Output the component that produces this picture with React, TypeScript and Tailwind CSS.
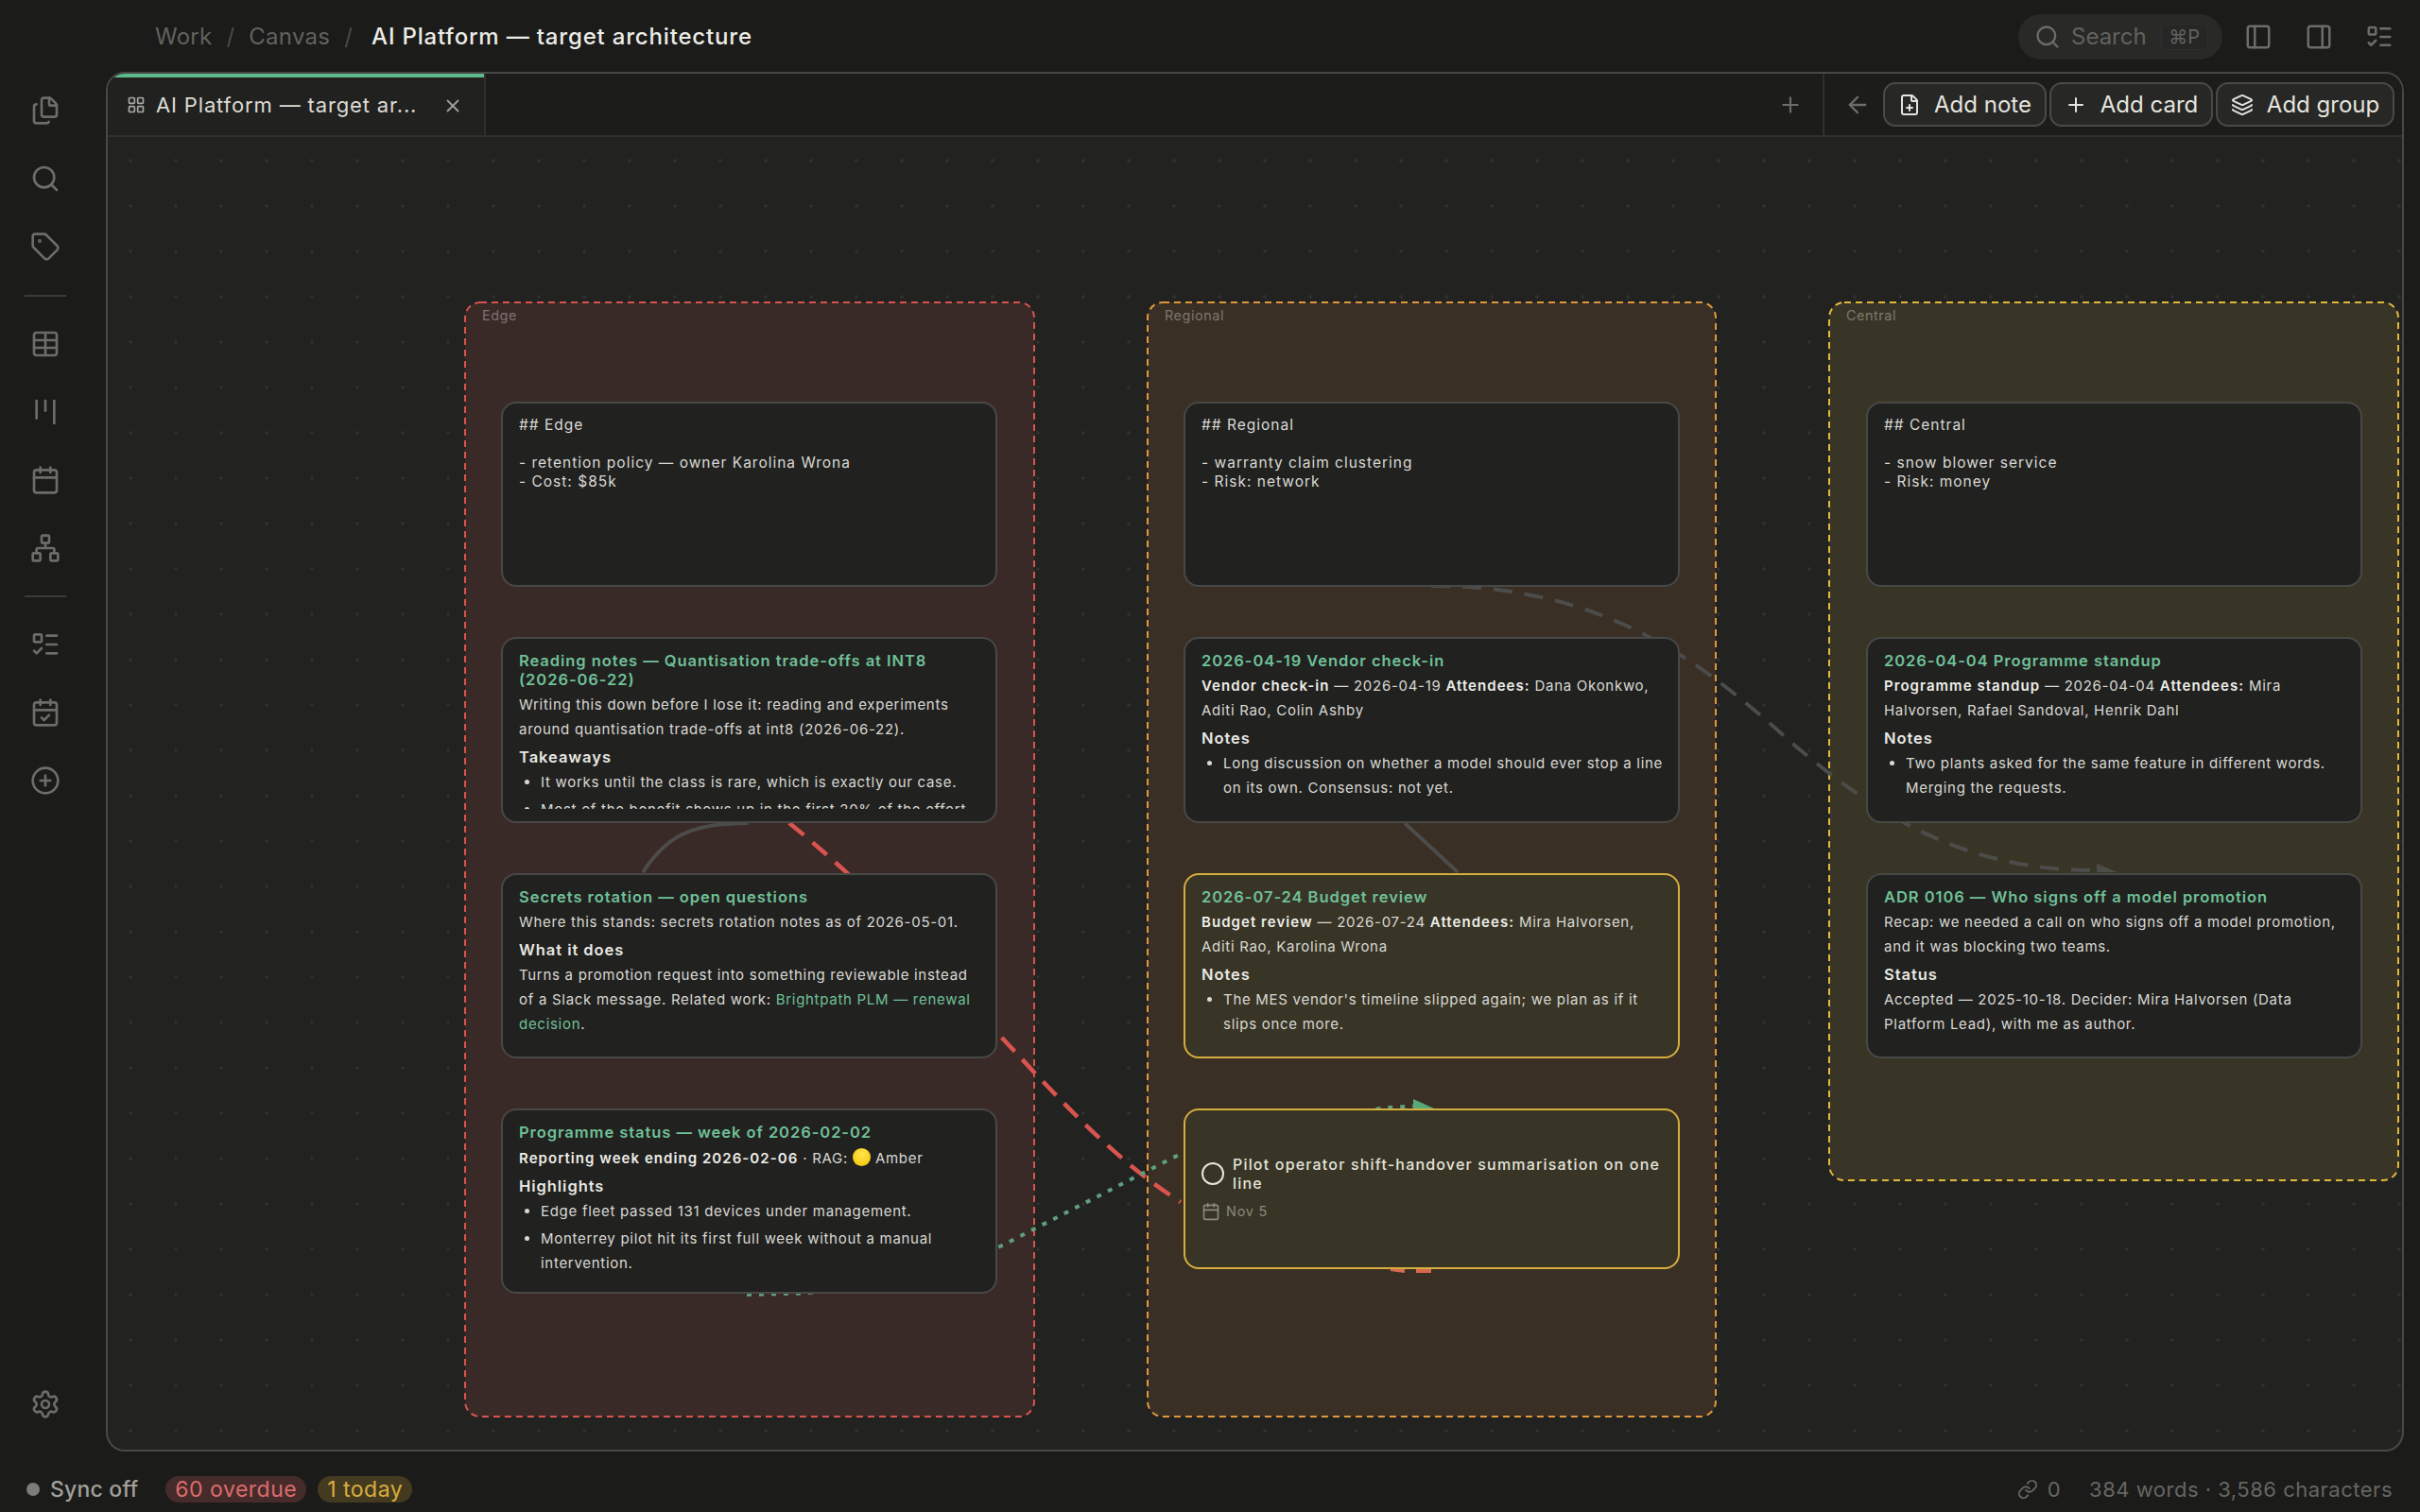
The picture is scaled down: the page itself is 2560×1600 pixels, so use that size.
import React from "react";
import {
  Files, Search, Tag, Table, Kanban, Calendar, Network, ListTodo, CalendarCheck, CirclePlus, Settings,
  PanelLeft, PanelRight, LayoutGrid, X, Plus, ArrowLeft, FilePlus, Layers, Link,
} from "lucide-react";

function Rail({ icon: Icon, cls = "" }: { icon: any; cls?: string }) {
  return (
    <div className={"flex h-[72px] w-full items-center justify-center text-[#6c6c68] " + cls}>
      <Icon size={32} />
    </div>
  );
}

function Sep() {
  return <div className="my-[-1px] h-[2px] w-[44px] bg-[#3a3a38]" />;
}

function ActionBtn({ icon: Icon, label, cls }: { icon: any; label: string; cls: string }) {
  return (
    <button className={"flex h-[47px] items-center justify-center gap-[14px] rounded-[13px] border-2 border-[#4a4a48] bg-[#272726] text-[24px] text-[#e4e4de] " + cls}>
      <Icon size={24} />
      <span>{label}</span>
    </button>
  );
}

function Group({ cls, fill, stroke, w, h, label }: { cls: string; fill: string; stroke: string; w: number; h: number; label: string }) {
  return (
    <div className={"absolute z-0 " + cls}>
      <svg width={w} height={h} className="absolute left-0 top-0">
        <rect x={1} y={1} width={w - 2} height={h - 2} rx={16} fill={fill} stroke={stroke} strokeWidth={2} strokeDasharray="7 5" />
      </svg>
      <div className="absolute left-[19px] top-[5px] text-[14.5px] leading-5 tracking-[0.5px] text-[#ffffff]/35">{label}</div>
    </div>
  );
}

function Card({ cls, sel, children }: { cls: string; sel?: boolean; children: React.ReactNode }) {
  return (
    <div className={"absolute z-20 box-border rounded-[16px] border-2 py-[13px] pl-[17px] pr-[12px] " + (sel ? "border-[#d6ae3e] bg-[#383426] " : "border-[#484846] bg-[#212120] ") + cls}>
      <div className="h-full overflow-hidden text-[15px] leading-[26px] tracking-[0.71px] text-[#d9d9d3]">{children}</div>
    </div>
  );
}

const T = ({ children }: { children: React.ReactNode }) => (
  <div className="mb-[4px] pr-[6px] text-[16.5px] font-semibold leading-[20px] tracking-[0.95px] text-[#70c097]">{children}</div>
);
const H = ({ children }: { children: React.ReactNode }) => (
  <div className="mb-[4px] mt-[6px] text-[16.5px] font-semibold leading-[20px] tracking-[0.95px] text-[#e8e8e2]">{children}</div>
);
const B = ({ children }: { children: React.ReactNode }) => <strong className="font-semibold tracking-[1.05px] text-[#eeeee8]">{children}</strong>;
const Li = ({ children }: { children: React.ReactNode }) => <li className="mb-[3px]">{children}</li>;
const Ul = ({ children }: { children: React.ReactNode }) => <ul className="list-disc pl-[23px]">{children}</ul>;
const Note = ({ text }: { text: string }) => (
  <div className="whitespace-pre text-[15.5px] leading-[20px] tracking-[1px]">{text}</div>
);

export default function App() {
  return (
    <div className="flex h-[1600px] w-[2560px] flex-col overflow-hidden bg-[#1b1b1a] [font-family:Inter,sans-serif]">
      {/* top bar */}
      <header className="flex h-[76px] shrink-0 items-center pl-[164px] pr-[28px] pt-[2px]">
        <div className="flex items-center text-[24px] tracking-[0.25px]">
          <span className="text-[#62625e]">Work</span>
          <span className="mx-[15px] text-[#4a4a47]">/</span>
          <span className="text-[#62625e]">Canvas</span>
          <span className="ml-[15px] mr-[20px] text-[#4a4a47]">/</span>
          <span className="font-medium tracking-[0.82px] text-[#ecece6]">AI Platform — target architecture</span>
        </div>
        <div className="ml-auto flex h-[48px] w-[216px] items-center rounded-full bg-[#292928] pl-[17px]">
          <Search size={28} className="text-[#6c6c68]" />
          <span className="ml-[11px] text-[24px] text-[#62625e]">Search</span>
          <span className="ml-[15px] flex h-[28px] w-[50px] items-center justify-center rounded-[6px] border border-[#2f2f2e] bg-[#262625] text-[20px] text-[#62625e]">⌘P</span>
        </div>
        <PanelLeft size={30} className="ml-[23px] text-[#6c6c68]" />
        <PanelRight size={30} className="ml-[34px] text-[#6c6c68]" />
        <ListTodo size={30} className="ml-[34px] text-[#6c6c68]" />
      </header>

      <div className="flex min-h-0 flex-1">
        {/* rail */}
        <nav className="flex w-[112px] shrink-0 flex-col items-center pr-[16px] pt-[5px]">
          <Rail icon={Files} />
          <Rail icon={Search} />
          <Rail icon={Tag} />
          <div className="h-[16px]" />
          <Sep />
          <div className="h-[15px]" />
          <Rail icon={Table} />
          <Rail icon={Kanban} />
          <Rail icon={Calendar} />
          <Rail icon={Network} />
          <div className="h-[15px]" />
          <Sep />
          <div className="h-[15px]" />
          <Rail icon={ListTodo} />
          <Rail icon={CalendarCheck} />
          <Rail icon={CirclePlus} />
          <div className="flex-1" />
          <Rail icon={Settings} cls="mb-[14px]" />
        </nav>

        {/* window */}
        <main className="mr-[17px] flex min-w-0 flex-1 flex-col overflow-hidden rounded-[20px] border-2 border-[#484846] bg-[#222221]">
          <div className="flex h-[67px] shrink-0 items-stretch border-b-2 border-[#2f2f2e] bg-[#1c1c1b]">
            <div className="relative flex w-[400px] shrink-0 items-center border-r-2 border-[#2f2f2e] bg-[#212120] pl-[20px] pt-[1px]">
              <div className="absolute left-0 right-0 top-0 h-[4px] bg-[#5cba8c]" />
              <LayoutGrid size={20} className="text-[#a8a8a2]" />
              <span className="ml-[11px] text-[22px] tracking-[0.85px] text-[#dcdcd6]">AI Platform — target ar...</span>
              <X size={22} className="absolute left-[354px] top-[23px] text-[#a0a09a]" />
            </div>
            <div className="flex-1" />
            <div className="flex w-[44px] items-center justify-center text-[#6c6c68]"><Plus size={26} /></div>
            <div className="w-[12px]" />
            <div className="flex items-center gap-[3px] border-l-2 border-[#2f2f2e] pl-[21px] pr-[8px]">
              <ArrowLeft size={28} className="mr-[10px] text-[#6c6c68]" />
              <ActionBtn icon={FilePlus} label="Add note" cls="w-[173px]" />
              <ActionBtn icon={Plus} label="Add card" cls="w-[173px]" />
              <ActionBtn icon={Layers} label="Add group" cls="w-[189px]" />
            </div>
          </div>

          {/* canvas */}
          <div className="relative flex-1 overflow-hidden bg-[radial-gradient(circle,#303030_1.5px,transparent_2px)] bg-[length:48px_48px] bg-[position:0_1px]">
            <Group cls="left-[377px] top-[174px]" fill="#3a2a27" stroke="#d9534f" w={604} h={1181} label="Edge" />
            <Group cls="left-[1099px] top-[174px]" fill="#3a2f25" stroke="#e0983e" w={603} h={1181} label="Regional" />
            <Group cls="left-[1820px] top-[174px]" fill="#393526" stroke="#e0b93c" w={604} h={931} label="Central" />

            <svg width={2428} height={1389} viewBox="114 145 2428 1389" className="absolute left-0 top-0 z-10" fill="none">
              <path d="M 792 871 C 730 871 705 885 680 923" stroke="#4c4c4a" strokeWidth={4} />
              <path d="M 1486 871 L 1542 923" stroke="#4c4c4a" strokeWidth={4} />
              <path d="M 1514 620 C 1700 620 1800 700 1900 790 C 1990 865 2080 923 2225 921" stroke="#4c4c4a" strokeWidth={4} strokeDasharray="20 13" />
              <polygon points="2218,914 2240,923 2218,923" fill="#4c4c4a" />
              <path d="M 835 871 Q 945 960 1055 1093 C 1100 1140 1170 1222 1249 1272" stroke="#d9534f" strokeWidth={4.5} strokeDasharray="20 12" />
              <path d="M 790 1370 L 848 1368.5 C 900 1365 990 1352 1060 1318 L 1245 1223 C 1300 1195 1400 1180 1470 1172 L 1500 1170" stroke="#5f9f7c" strokeWidth={4} strokeDasharray="5 8" />
              <polygon points="1495,1163 1517,1173 1495,1173" fill="#58a878" />
              <path d="M 1471 1343 L 1486 1345 M 1498 1345 L 1514 1345" stroke="#d6684f" strokeWidth={4} />
            </svg>

            {/* Edge column */}
            <Card cls="left-[416px] top-[280px] h-[196px] w-[525px]">
              <Note text={"## Edge\n\n- retention policy — owner Karolina Wrona\n- Cost: $85k"} />
            </Card>
            <Card cls="left-[416px] top-[529px] h-[197px] w-[525px]">
              <T>Reading notes — Quantisation trade-offs at INT8 (2026-06-22)</T>
              <p>Writing this down before I lose it: reading and experiments around quantisation trade-offs at int8 (2026-06-22).</p>
              <H>Takeaways</H>
              <Ul>
                <Li>It works until the class is rare, which is exactly our case.</Li>
                <Li>Most of the benefit shows up in the first 20% of the effort.</Li>
              </Ul>
            </Card>
            <Card cls="left-[416px] top-[779px] h-[196px] w-[525px]">
              <T>Secrets rotation — open questions</T>
              <p>Where this stands: secrets rotation notes as of 2026-05-01.</p>
              <H>What it does</H>
              <p>Turns a promotion request into something reviewable instead of a Slack message. Related work: <span className="text-[#70c097]">Brightpath PLM — renewal decision</span>.</p>
            </Card>
            <Card cls="left-[416px] top-[1028px] h-[196px] w-[525px]">
              <T>Programme status — week of 2026-02-02</T>
              <p><B>Reporting week ending 2026-02-06</B> · RAG: <span className="inline-block h-[19px] w-[19px] translate-y-[3px] rounded-full bg-[radial-gradient(circle_at_50%_35%,#ffe64d,#f5bf00)]" /> Amber</p>
              <H>Highlights</H>
              <Ul>
                <Li>Edge fleet passed 131 devices under management.</Li>
                <Li>Monterrey pilot hit its first full week without a manual intervention.</Li>
              </Ul>
            </Card>

            {/* Regional column */}
            <Card cls="left-[1138px] top-[280px] h-[196px] w-[525px]">
              <Note text={"## Regional\n\n- warranty claim clustering\n- Risk: network"} />
            </Card>
            <Card cls="left-[1138px] top-[529px] h-[197px] w-[525px]">
              <T>2026-04-19 Vendor check-in</T>
              <p><B>Vendor check-in</B> — 2026-04-19 <B>Attendees:</B> Dana Okonkwo, Aditi Rao, Colin Ashby</p>
              <H>Notes</H>
              <Ul><Li>Long discussion on whether a model should ever stop a line on its own. Consensus: not yet.</Li></Ul>
            </Card>
            <Card sel cls="left-[1138px] top-[779px] h-[196px] w-[525px]">
              <T>2026-07-24 Budget review</T>
              <p><B>Budget review</B> — 2026-07-24 <B>Attendees:</B> Mira Halvorsen, Aditi Rao, Karolina Wrona</p>
              <H>Notes</H>
              <Ul><Li>The MES vendor's timeline slipped again; we plan as if it slips once more.</Li></Ul>
            </Card>
            <Card sel cls="left-[1138px] top-[1028px] h-[170px] w-[525px]">
              <div className="flex h-full flex-col justify-center pb-[3px] pr-[4px]">
                <div className="flex items-center gap-[9px]">
                  <span className="h-[24px] w-[24px] shrink-0 rounded-full border-2 border-[#e6e6da]" />
                  <span className="text-[16px] font-medium leading-[20px] tracking-[1.18px] text-[#e4e4da]">Pilot operator shift-handover summarisation on one line</span>
                </div>
                <div className="mt-[10px] flex items-center gap-[6px] text-[14.5px] leading-[20px] text-[#8a8a7e]">
                  <Calendar size={20} />
                  <span>Nov 5</span>
                </div>
              </div>
            </Card>

            {/* Central column */}
            <Card cls="left-[1860px] top-[280px] h-[196px] w-[525px]">
              <Note text={"## Central\n\n- snow blower service\n- Risk: money"} />
            </Card>
            <Card cls="left-[1860px] top-[529px] h-[197px] w-[525px]">
              <T>2026-04-04 Programme standup</T>
              <p><B>Programme standup</B> — 2026-04-04 <B>Attendees:</B> Mira Halvorsen, Rafael Sandoval, Henrik Dahl</p>
              <H>Notes</H>
              <Ul><Li>Two plants asked for the same feature in different words. Merging the requests.</Li></Ul>
            </Card>
            <Card cls="left-[1860px] top-[779px] h-[196px] w-[525px]">
              <T>ADR 0106 — Who signs off a model promotion</T>
              <p>Recap: we needed a call on who signs off a model promotion, and it was blocking two teams.</p>
              <H>Status</H>
              <p>Accepted — 2025-10-18. Decider: Mira Halvorsen (Data Platform Lead), with me as author.</p>
            </Card>
          </div>
        </main>
      </div>

      {/* status bar */}
      <footer className="flex h-[64px] shrink-0 items-center pl-[28px] pr-[29px] pt-[16px]">
        <span className="h-[14px] w-[14px] rounded-full bg-[#7c7c78]" />
        <span className="ml-[11px] text-[23px] font-medium tracking-[0.2px] text-[#a0a09a]">Sync off</span>
        <span className="ml-[29px] flex h-[28px] items-center rounded-full bg-[#462b2b] px-[10px] text-[23px] tracking-[0.5px] text-[#de6b6b]">60 overdue</span>
        <span className="ml-[12px] flex h-[28px] items-center rounded-full bg-[#433a20] px-[10px] text-[23px] tracking-[0.5px] text-[#d9ad3f]">1 today</span>
        <div className="ml-auto flex items-center text-[22px] tracking-[0.5px] text-[#666662]">
          <Link size={22} />
          <span className="ml-[10px]">0</span>
          <span className="ml-[30px]">384 words · 3,586 characters</span>
        </div>
      </footer>
    </div>
  );
}
